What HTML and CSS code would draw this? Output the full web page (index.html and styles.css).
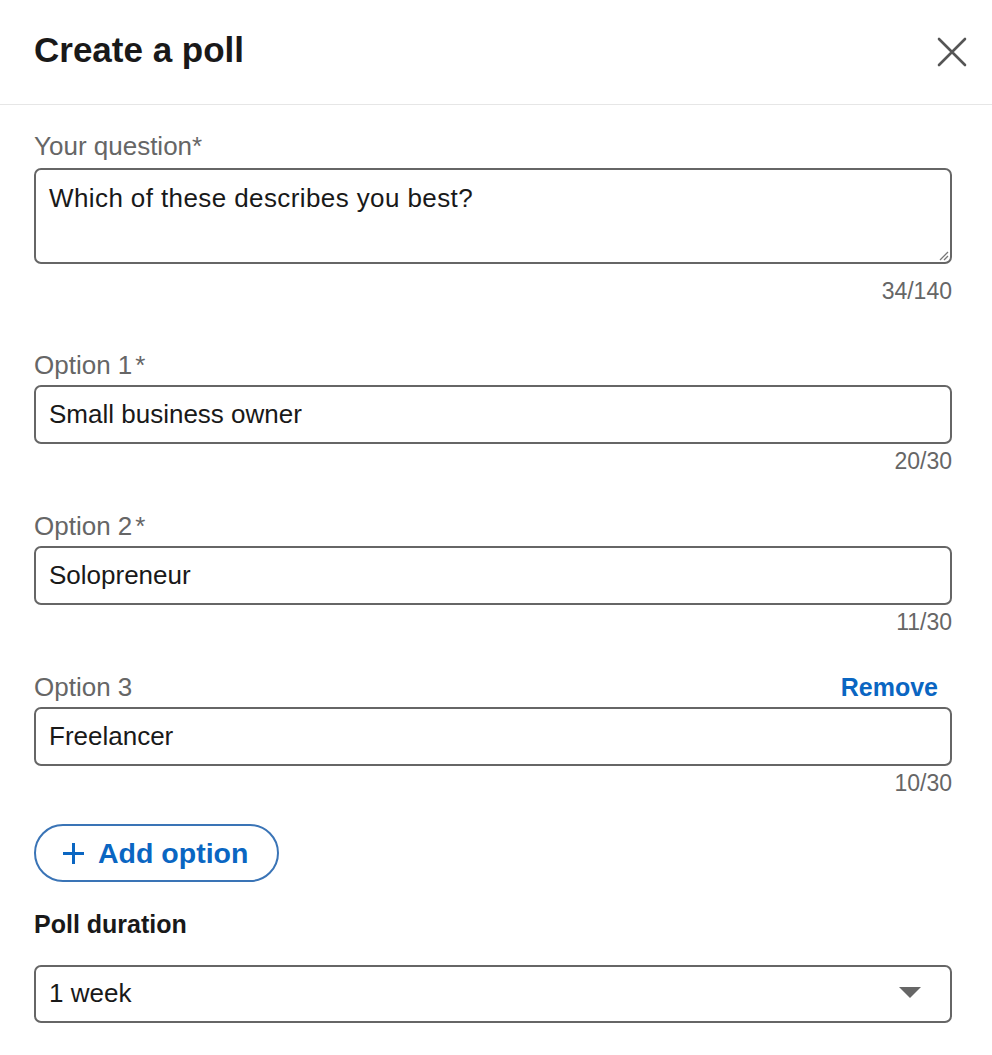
FILE: index.html
```html
<!DOCTYPE html>
<html lang="en">
<head>
<meta charset="utf-8">
<title>Create a poll</title>
<link rel="stylesheet" href="styles.css">
</head>
<body>
<div class="modal">
  <header class="modal-header">
    <h1 class="title">Create a poll</h1>
    <button class="close" aria-label="Close">
      <svg width="30" height="30" viewBox="0 0 30 30"><path d="M2 2 L28 28 M28 2 L2 28" stroke="#555" stroke-width="2.6" fill="none" stroke-linecap="round"/></svg>
    </button>
  </header>
  <div class="modal-body">
    <div class="field field-question">
      <div class="label-row"><span class="label">Your question*</span></div>
      <div class="box textarea"><span class="question-text">Which of these describes you best?</span>
        <svg class="grip" width="12" height="12" viewBox="0 0 12 12"><path d="M11 3 L3 11 M11 7 L7 11" stroke="#777" stroke-width="1.3" fill="none"/></svg>
      </div>
      <div class="counter counter-question">34/140</div>
    </div>
    <div class="field">
      <div class="label-row"><span class="label">Option 1<span class="req">*</span></span></div>
      <div class="box">Small business owner</div>
      <div class="counter">20/30</div>
    </div>
    <div class="field">
      <div class="label-row"><span class="label">Option 2<span class="req">*</span></span></div>
      <div class="box">Solopreneur</div>
      <div class="counter">11/30</div>
    </div>
    <div class="field field-last">
      <div class="label-row"><span class="label">Option 3</span><span class="remove">Remove</span></div>
      <div class="box">Freelancer</div>
      <div class="counter">10/30</div>
    </div>
    <button class="add-option">
      <svg class="plus" width="23" height="23" viewBox="0 0 23 23"><path d="M11.5 1 V22 M1 11.5 H22" stroke="#0a66c2" stroke-width="3" fill="none"/></svg>
      <span>Add option</span>
    </button>
    <div class="duration-label">Poll duration</div>
    <div class="box select">
      <span>1 week</span>
      <svg class="caret" width="22" height="12" viewBox="0 0 22 12"><path d="M0 0 H22 L11 11 Z" fill="#666"/></svg>
    </div>
  </div>
</div>
</body>
</html>
```
FILE: styles.css
```css
* { box-sizing: border-box; }
html, body { margin: 0; padding: 0; background: #fff; }
body {
  font-family: "Liberation Sans", Arial, sans-serif;
  color: #191919;
  width: 992px;
}
.modal { width: 992px; }
.modal-header {
  display: flex;
  align-items: flex-start;
  justify-content: space-between;
  padding: 30px 25px 0 34px;
  height: 105px;
  border-bottom: 1px solid #e6e6e6;
}
.title {
  margin: 0;
  font-size: 35px;
  line-height: 40px;
  font-weight: 700;
  color: #191919;
}
.close {
  border: 0;
  background: none;
  padding: 0;
  margin-top: 7px;
  width: 30px;
  height: 30px;
  display: flex;
}
.modal-body {
  padding: 25px 40px 0 34px;
  display: flex;
  flex-direction: column;
}
.field { display: flex; flex-direction: column; margin-bottom: 35px; }
.field-question { margin-bottom: 44px; }
.field-last { margin-bottom: 27px; }
.label-row {
  display: flex;
  justify-content: space-between;
  align-items: baseline;
  margin-bottom: 4px;
}
.field-question .label-row { margin-bottom: 6px; }
.label {
  font-size: 26px;
  line-height: 32px;
  color: #666;
}
.req { margin-left: 3px; }
.remove {
  font-size: 25px;
  line-height: 32px;
  font-weight: 700;
  color: #0a66c2;
  margin-right: 14px;
}
.box {
  position: relative;
  border: 2px solid #666;
  border-radius: 7px;
  padding: 11px 13px 12px;
  font-size: 26px;
  line-height: 32px;
  color: #191919;
  height: 59px;
}
.textarea {
  height: 96px;
  padding-top: 12px;
}
.question-text { letter-spacing: 0.4px; }
.grip { position: absolute; right: 1px; bottom: 1px; }
.counter {
  align-self: flex-end;
  font-size: 23px;
  line-height: 28px;
  color: #666;
  margin-top: 3px;
}
.counter-question { margin-top: 13px; }
.add-option {
  align-self: flex-start;
  display: inline-flex;
  align-items: center;
  gap: 13px;
  height: 58px;
  padding: 0 29px 0 26px;
  border: 2px solid #3a74b6;
  border-radius: 30px;
  background: #fff;
  color: #0a66c2;
  font-family: "Liberation Sans", Arial, sans-serif;
  font-size: 28.5px;
  font-weight: 700;
  margin-bottom: 27px;
}
.plus { flex: none; }
.duration-label {
  font-size: 25px;
  line-height: 30px;
  font-weight: 700;
  color: #191919;
  margin-bottom: 26px;
}
.select {
  display: flex;
  justify-content: space-between;
  align-items: center;
  height: 58px;
  padding: 10px 29px 12px 13px;
}
.caret { flex: none; }
```
